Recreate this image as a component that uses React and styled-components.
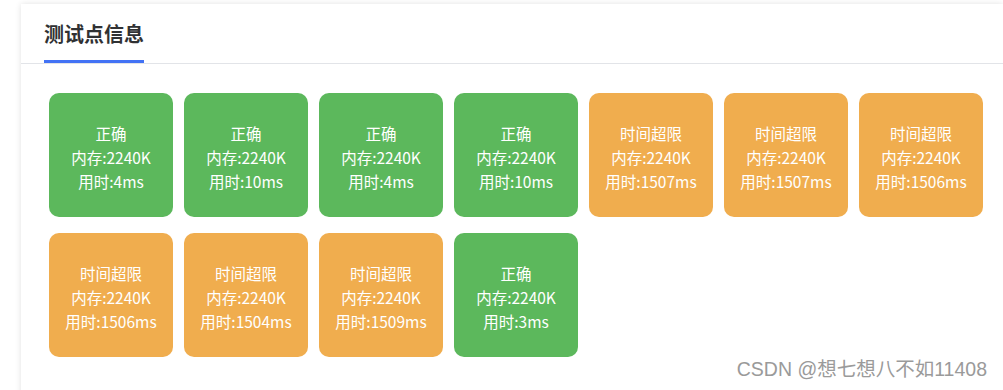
import React from 'react';
import styled, { createGlobalStyle } from 'styled-components';

const GlobalStyle = createGlobalStyle`
  html, body {
    margin: 0;
    padding: 0;
    background: #ffffff;
    font-family: "Liberation Sans", "Noto Sans CJK SC", sans-serif;
  }
`;

const CASES = [
  { ok: true, memory: '2240K', time: '4ms' },
  { ok: true, memory: '2240K', time: '10ms' },
  { ok: true, memory: '2240K', time: '4ms' },
  { ok: true, memory: '2240K', time: '10ms' },
  { ok: false, memory: '2240K', time: '1507ms' },
  { ok: false, memory: '2240K', time: '1507ms' },
  { ok: false, memory: '2240K', time: '1506ms' },
  { ok: false, memory: '2240K', time: '1506ms' },
  { ok: false, memory: '2240K', time: '1504ms' },
  { ok: false, memory: '2240K', time: '1509ms' },
  { ok: true, memory: '2240K', time: '3ms' },
];

export default function App () {
  return (
    <Page>
      <GlobalStyle />
      <Card>
        <Header>
          <Tab>测试点信息</Tab>
        </Header>
        <CaseList>
          {CASES.map((item, index) => (
            <CaseBox key={index} ok={item.ok}>
              <CaseLine>{item.ok ? '正确' : '时间超限'}</CaseLine>
              <CaseLine>内存:{item.memory}</CaseLine>
              <CaseLine>用时:{item.time}</CaseLine>
            </CaseBox>
          ))}
        </CaseList>
      </Card>
      <Watermark>CSDN @想七想八不如11408</Watermark>
    </Page>
  );
}

const Page = styled.div`
  position: relative;
  height: 390px;
  overflow: hidden;
  padding: 4px 0 0 21px;
  box-sizing: border-box;
`;

const Card = styled.div`
  background: #fff;
  min-height: 420px;
  box-shadow: 0 0 6px rgba(0, 0, 0, 0.12);
`;

const Header = styled.div`
  display: flex;
  padding-left: 23px;
  border-bottom: 1px solid #e2e4e8;
`;

const Tab = styled.div`
  font-family: "Noto Sans CJK SC", sans-serif;
  font-size: 20px;
  font-weight: 700;
  color: #303133;
  line-height: 56px;
  padding-top: 2px;
  height: 54px;
  border-bottom: 3px solid #4272f5;
`;

const CaseList = styled.div`
  display: flex;
  flex-wrap: wrap;
  gap: 16px 11px;
  padding: 29px 0 0 28px;
`;

const CaseBox = styled.div`
  width: 124px;
  height: 124px;
  box-sizing: border-box;
  padding-top: 4px;
  border-radius: 10px;
  background: ${(p) => (p.ok ? '#5cb85c' : '#f0ad4e')};
  color: #fff;
  display: flex;
  flex-direction: column;
  align-items: center;
  justify-content: center;
`;

const CaseLine = styled.div`
  font-family: "Noto Sans CJK SC", sans-serif;
  font-size: 15.5px;
  line-height: 24px;
  white-space: nowrap;
`;

const Watermark = styled.div`
  position: absolute;
  right: 16px;
  bottom: 8px;
  font-family: "Liberation Sans", "Noto Sans CJK SC", sans-serif;
  font-size: 19.5px;
  color: #9a9a9a;
  text-shadow: 0 0 2px #fff, 0 0 2px #fff;
`;
